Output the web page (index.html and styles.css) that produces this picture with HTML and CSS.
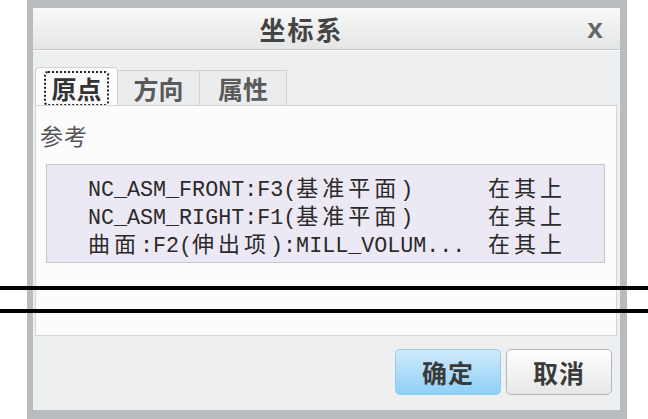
FILE: index.html
```html
<!DOCTYPE html>
<html lang="zh-CN">
<head>
    <meta charset="UTF-8">
    <title>坐标系</title>
    <link rel="stylesheet" href="styles.css">
</head>
<body>

    <div class="dialog">
        <div class="title-bar">
            <div class="title">坐标系</div>
            <div class="close">x</div>
        </div>

        <div class="dialog-body">
            <div class="tabs">
                <div class="tab active"><span class="focus">原点</span></div>
                <div class="tab">方向</div>
                <div class="tab">属性</div>
            </div>

            <div class="panel">
                <div class="label">参考</div>
                <div class="ref-list">
                    <div class="ref-row">
                        <span class="ref-name">NC_ASM_FRONT:F3(<span class="cn">基准平面</span>)</span>
                        <span class="cn">在其上</span>
                    </div>
                    <div class="ref-row">
                        <span class="ref-name">NC_ASM_RIGHT:F1(<span class="cn">基准平面</span>)</span>
                        <span class="cn">在其上</span>
                    </div>
                    <div class="ref-row">
                        <span class="ref-name"><span class="cn">曲面</span>:F2(<span class="cn">伸出项</span>):MILL_VOLUM...</span>
                        <span class="cn">在其上</span>
                    </div>
                </div>
            </div>

            <div class="footer">
                <button class="btn btn-ok">确定</button>
                <button class="btn">取消</button>
            </div>
        </div>
    </div>

    <!-- linhas de corte por cima do diálogo -->
    <div class="cut-line cut-top"></div>
    <div class="cut-line cut-bottom"></div>

</body>
</html>
```

FILE: styles.css
```css
/* --- Geral --- */
* {
    margin: 0;
    padding: 0;
    box-sizing: border-box;
}

body {
    position: relative;
    width: 648px;
    height: 419px;
    overflow: hidden;
    background: #ffffff;
    font-family: "Noto Sans CJK SC", sans-serif;
    color: #3a3a3a;
}

/* --- Moldura do diálogo --- */
.dialog {
    width: 600px;
    height: 419px;
    margin-left: 27px;
    display: flex;
    flex-direction: column;
    border-style: solid;
    border-color: #b9bcbe;
    border-width: 8px 7px 9px 6px;
    background: #eeeff0;
}

/* --- Barra de título --- */
.title-bar {
    height: 42px;
    display: grid;
    grid-template-columns: 1fr 50px;
    align-items: center;
    background: linear-gradient(#f9f9f9, #e4e5e6);
    border-bottom: 1px solid #c9cbcd;
}
.title {
    text-align: center;
    font-size: 26px;
    font-weight: 700;
    letter-spacing: 2px;
    color: #444;
    line-height: 38px;
}
.close {
    font-family: "Liberation Sans", sans-serif;
    font-size: 28px;
    font-weight: 700;
    color: #666;
    text-align: center;
    line-height: 38px;
}

/* --- Corpo --- */
.dialog-body {
    flex: 1;
    display: flex;
    flex-direction: column;
    padding: 0 3px 0 2px;
    border-top: 1px solid #fafafa;
}

/* --- Abas --- */
.tabs {
    display: flex;
    align-items: flex-end;
    margin-top: 15px;
    height: 39px;
}
.tab {
    height: 35px;
    width: 82px;
    display: flex;
    justify-content: center;
    align-items: center;
    font-size: 25px;
    font-weight: 700;
    color: #5a5a5a;
    background: #ebeced;
    border: 1px solid #cfd1d3;
    border-bottom: none;
    border-left: none;
}
.tab:last-child {
    width: 87px;
}
.tab.active {
    height: 39px;
    width: 83px;
    background: #fcfcfc;
    border-left: 1px solid #cfd1d3;
    border-radius: 4px 4px 0 0;
    margin-bottom: -1px;
    color: #333;
}
.focus {
    border: 2px dotted #222;
    border-radius: 4px;
    padding: 0 5px;
    line-height: 31px;
    margin-top: 3px;
}

/* --- Painel --- */
.panel {
    height: 231px;
    background: #fcfcfc;
    border: 1px solid #d3d5d7;
    padding: 14px 11px 0 4px;
}
.label {
    font-size: 23px;
    line-height: 30px;
    color: #555;
    letter-spacing: 1px;
}
.ref-list {
    margin: 14px 0 0 6px;
    height: 99px;
    padding: 7px 0 0 41px;
    background: #ece8f4;
    border: 1px solid #c6c6cb;
}
.ref-row {
    display: flex;
    align-items: baseline;
    height: 28px;
    line-height: 28px;
    font-family: "Liberation Mono", "Noto Sans CJK SC", monospace;
    font-size: 21.7px;
    color: #2a2a2a;
}
.ref-name {
    width: 400px;
    white-space: nowrap;
}
.cn {
    display: inline-block;
    height: 28px;
    line-height: 28px;
    font-family: "Noto Sans CJK SC", sans-serif;
    font-size: 22px;
    letter-spacing: 4px;
}

/* --- Rodapé e botões --- */
.footer {
    flex: 1;
    display: flex;
    justify-content: flex-end;
    align-items: flex-start;
    gap: 5px;
    padding: 13px 5px 0 0;
}
.btn {
    width: 106px;
    height: 46px;
    font-family: "Noto Sans CJK SC", sans-serif;
    font-size: 25px;
    font-weight: 700;
    color: #3a3a3a;
    border: 1px solid #b4b6b8;
    border-radius: 5px;
    background: linear-gradient(#fefefe, #e6e7e8);
    letter-spacing: 1px;
}
.btn-ok {
    border-color: #9ccbe8;
    background: linear-gradient(#cfeafb, #8fcff5);
}

/* --- Linhas de corte (sobrepostas) --- */
.cut-line {
    position: absolute;
    left: 0;
    width: 648px;
    height: 4px;
    background: #000;
}
.cut-top {
    top: 286px;
}
.cut-bottom {
    top: 309px;
}
```
